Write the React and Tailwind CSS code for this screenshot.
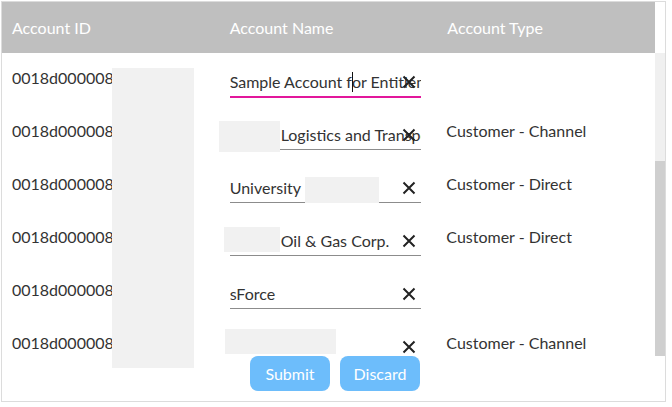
import React from "react";

const rows = [
  { id: "0018d000008", name: "Sample Account for Entitlements", type: "", focused: true, cursorAt: 16 },
  { id: "0018d000008", name: "Logistics and Transportation", type: "Customer - Channel", indent: 51 },
  { id: "0018d000008", name: "University", type: "Customer - Direct" },
  { id: "0018d000008", name: "Oil & Gas Corp.", type: "Customer - Direct", indent: 51 },
  { id: "0018d000008", name: "sForce", type: "" },
  { id: "0018d000008", name: "", type: "Customer - Channel" },
];

const ClearIcon = () => (
  <svg width="14" height="14" viewBox="0 0 14 14" className="text-[#222]">
    <path d="M1.5 1.5 12.5 12.5 M12.5 1.5 1.5 12.5" stroke="currentColor" strokeWidth="2" fill="none" />
  </svg>
);

const NameField = ({ row }) => {
  const before = row.cursorAt ? row.name.slice(0, row.cursorAt) : row.name;
  const after = row.cursorAt ? row.name.slice(row.cursorAt) : "";
  return (
    <div
      className={
        "relative w-[191px] pb-[4px] " +
        (row.focused ? "border-b-2 border-[#e2169b]" : "border-b border-[#8c8c8c]")
      }
    >
      <div className="min-h-5 overflow-hidden whitespace-nowrap leading-5">
        {row.indent ? <span className="inline-block w-[51px]" /> : null}
        {before}
        {row.cursorAt ? (
          <span className="relative">
            <span className="absolute left-0 top-0 h-5 w-px bg-[#111]" />
          </span>
        ) : null}
        {after}
      </div>
      <span className="absolute right-[5px] top-[3px]">
        <ClearIcon />
      </span>
    </div>
  );
};

const App = () => {
  return (
    <div className="relative m-px flex h-[401px] w-[665px] flex-col border border-[#dcdcdc] bg-white font-['Lato',sans-serif] text-[16px] text-[#333]">
      {/* header */}
      <div className="flex">
        <div className="grid h-[51px] w-[653px] grid-cols-3 items-center bg-[#bfbfbf] text-white">
          <div className="pl-[10px]">Account ID</div>
          <div className="pl-[10px]">Account Name</div>
          <div className="pl-[10px]">Account Type</div>
        </div>
      </div>

      {/* body */}
      <div className="flex h-[303px]">
        <div className="w-[653px] overflow-hidden">
          {rows.map((row, i) => (
            <div key={i} className="grid h-[53px] shrink-0 grid-cols-3">
              <div className="pl-[10px] pt-[15px] leading-5">{row.id}</div>
              <div className="pl-[10px] pt-[19px]">
                <NameField row={row} />
              </div>
              <div className="pl-[9px] pt-[15px] leading-5">{row.type}</div>
            </div>
          ))}
        </div>
        <div className="flex w-[10px] flex-col">
          <div className="h-[108px] bg-[#f0f0f0]" />
          <div className="flex-1 bg-[#cfcfcf]" />
        </div>
      </div>

      {/* footer */}
      <div className="flex flex-1 gap-[10px] pl-[248px]">
        <button className="h-[35px] w-[80px] rounded-lg bg-[#6dbdfb] text-white">Submit</button>
        <button className="h-[35px] w-[80px] rounded-lg bg-[#6dbdfb] text-white">Discard</button>
      </div>

      {/* redacted areas */}
      <div className="absolute left-[110px] top-[66px] h-[300px] w-[82px] bg-[#f1f1f1]" />
      <div className="absolute left-[217px] top-[119px] h-[31px] w-[61px] bg-[#f1f1f1]" />
      <div className="absolute left-[303px] top-[175px] h-[26px] w-[74px] bg-[#f1f1f1]" />
      <div className="absolute left-[222px] top-[225px] h-[25px] w-[56px] bg-[#f1f1f1]" />
      <div className="absolute left-[223px] top-[327px] h-[25px] w-[111px] bg-[#f1f1f1]" />
    </div>
  );
};

export default App;
